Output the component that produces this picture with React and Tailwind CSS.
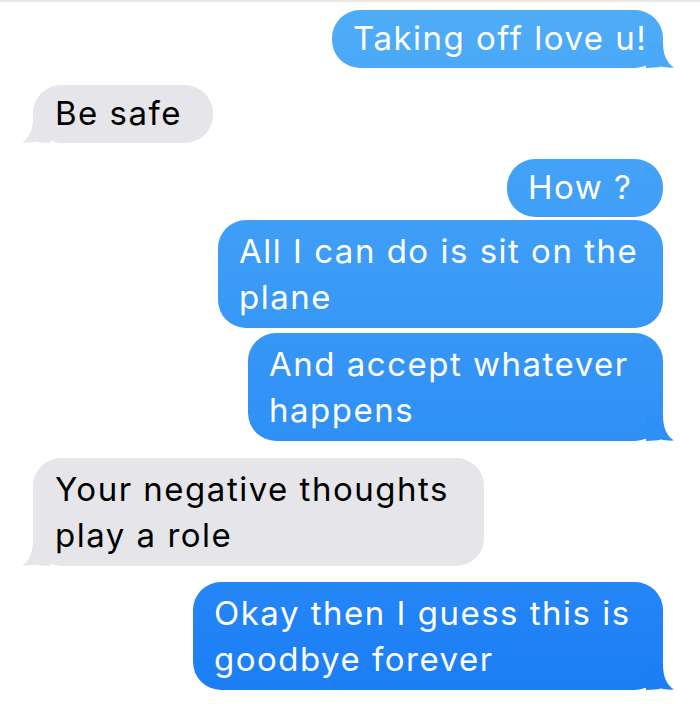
import React from 'react';

const font = { fontFamily: 'Inter, "Liberation Sans", Arial, sans-serif' };

const SentTail = ({ color }) => (
  <svg className="absolute -right-[11px] bottom-0" width="28" height="26" viewBox="0 0 28 26">
    <path d="M0 0 L17 0 C17 12 20 20 28 25.6 C24 26 19 25.6 15 24.6 C11 25.6 6 26 0 26 Z" fill={color} />
  </svg>
);

const ReceivedTail = () => (
  <svg className="absolute -left-[11px] bottom-0" width="28" height="26" viewBox="0 0 28 26">
    <path d="M28 0 L11 0 C11 12 8 20 0 25.6 C4 26 9 25.6 13 24.6 C17 25.6 22 26 28 26 Z" fill="#e5e5ea" />
  </svg>
);

const Sent = ({ children, width, tail, multi, className = '' }) => (
  <div className={`flex justify-end ${className}`}>
    <div
      className={`relative rounded-[28px] bg-linear-to-b from-[#4fadf7] to-[#1a7df5] bg-fixed px-[21px] text-white text-[33px] leading-[46px] tracking-[1.5px] whitespace-nowrap ${multi ? 'py-[8px]' : 'py-[5px] pb-[7px]'}`}
      style={{ width, ...font }}
    >
      {tail && <SentTail color={tail} />}
      <span className="relative">{children}</span>
    </div>
  </div>
);

const Received = ({ children, width, multi, className = '' }) => (
  <div className={`flex justify-start ${className}`}>
    <div
      className={`relative rounded-[28px] bg-[#e5e5ea] px-[22px] text-black text-[33px] leading-[46px] tracking-[1.5px] whitespace-nowrap ${multi ? 'py-[8px]' : 'py-[5px] pb-[7px]'}`}
      style={{ width, ...font }}
    >
      <ReceivedTail />
      <span className="relative">{children}</span>
    </div>
  </div>
);

export default function App() {
  return (
    <div className="w-[700px] h-[704px] overflow-hidden bg-white border-t-2 border-[#e9e9ea] pl-[33px] pr-[37px] pt-[8px]">
      <Sent width="331px" tail="#4aa8f7">Taking off love u!</Sent>
      <Received width="180px" className="mt-[17px]">Be safe</Received>
      <Sent width="156px" className="mt-[16px]">How ?</Sent>
      <Sent width="445px" multi className="mt-[3px]">
        All I can do is sit on the<br />plane
      </Sent>
      <Sent width="415px" multi tail="#2e8ff6" className="mt-[5px]">
        And accept whatever<br />happens
      </Sent>
      <Received width="451px" multi className="mt-[17px]">
        Your negative thoughts<br />play a role
      </Received>
      <Sent width="470px" multi tail="#1b7ef5" className="mt-[16px]">
        Okay then I guess this is<br />goodbye forever
      </Sent>
    </div>
  );
}
